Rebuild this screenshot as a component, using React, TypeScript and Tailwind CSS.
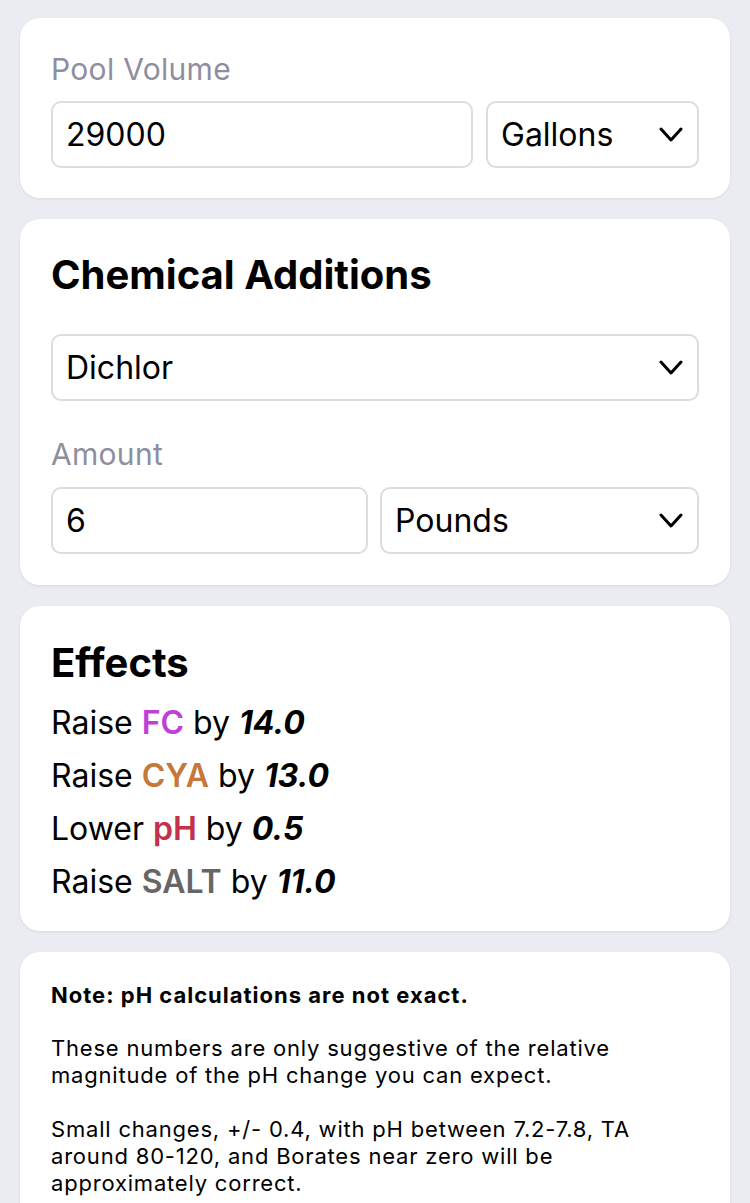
const font = { fontFamily: "Inter, 'Liberation Sans', sans-serif" };

function Card({ children, className = "" }: { children: React.ReactNode; className?: string }) {
  return (
    <section
      className={`rounded-[20px] bg-white px-[31px] shadow-[0_1px_3px_rgba(0,0,0,0.08)] ${className}`}
    >
      {children}
    </section>
  );
}

function Chevron() {
  return (
    <svg width="24" height="16" viewBox="0 0 24 16" fill="none" stroke="currentColor" strokeWidth="3" strokeLinecap="round" strokeLinejoin="round">
      <polyline points="2,2 12,13 22,2" />
    </svg>
  );
}

function Field({ value, className = "" }: { value: string; className?: string }) {
  return (
    <div
      className={`flex h-[67px] items-center rounded-[10px] border-2 border-[#dcdcdf] bg-white px-[13px] text-[32px] text-black ${className}`}
    >
      {value}
    </div>
  );
}

function Select({ value, className = "" }: { value: string; className?: string }) {
  return (
    <div
      className={`flex h-[67px] items-center justify-between rounded-[10px] border-2 border-[#dcdcdf] bg-white pl-[13px] pr-[14px] text-[32px] text-black ${className}`}
    >
      <span>{value}</span>
      <Chevron />
    </div>
  );
}

const effects = [
  { verb: "Raise", name: "FC", color: "text-[#bf3fd8]", amount: "14.0" },
  { verb: "Raise", name: "CYA", color: "text-[#c4783a]", amount: "13.0" },
  { verb: "Lower", name: "pH", color: "text-[#c2304b]", amount: "0.5" },
  { verb: "Raise", name: "SALT", color: "text-[#666666]", amount: "11.0" },
];

export default function App() {
  return (
    <div className="flex min-h-[1203px] flex-col gap-[21px] bg-[#ebebf2] px-[20px] pt-[18px]" style={font}>
      <Card className="pb-[30px] pt-[33px]">
        <div className="text-[30px] leading-[36px] tracking-[0.3px] text-[#8e8e9e]">Pool Volume</div>
        <div className="mt-[14px] flex gap-[13px]">
          <Field value="29000" className="flex-1" />
          <Select value="Gallons" className="w-[213px]" />
        </div>
      </Card>

      <Card className="pb-[31px] pt-[32px]">
        <h2 className="text-[40px] font-bold leading-[48px] text-black">Chemical Additions</h2>
        <Select value="Dichlor" className="mt-[35px]" />
        <div className="mt-[35px] text-[30px] leading-[36px] tracking-[0.3px] text-[#8e8e9e]">Amount</div>
        <div className="mt-[15px] flex gap-[12px]">
          <Field value="6" className="flex-1" />
          <Select value="Pounds" className="w-[319px]" />
        </div>
      </Card>

      <Card className="pb-[23px] pt-[33px]">
        <h2 className="text-[40px] font-bold leading-[48px] text-black">Effects</h2>
        <ul className="mt-[9px] text-[32px] leading-[53px] text-black">
          {effects.map((e) => (
            <li key={e.name}>
              {e.verb} <span className={`font-semibold ${e.color}`}>{e.name}</span> by{" "}
              <em className="font-bold">{e.amount}</em>
            </li>
          ))}
        </ul>
      </Card>

      <Card className="pb-[30px] pt-[30px]">
        <div className="text-[22px] leading-[27px] tracking-[0.8px] text-black">
          <p className="font-bold tracking-[1px]">Note: pH calculations are not exact.</p>
          <p className="mt-[26px]">
            These numbers are only suggestive of the relative magnitude of the pH change you can expect.
          </p>
          <p className="mt-[27px]">
            Small changes, +/- 0.4, with pH between 7.2-7.8, TA around 80-120, and Borates near zero will be
            approximately correct.
          </p>
        </div>
      </Card>
    </div>
  );
}
